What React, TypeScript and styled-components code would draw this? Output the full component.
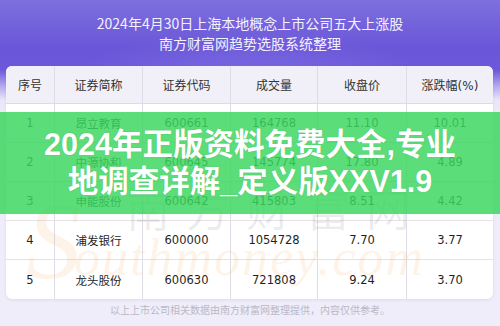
import React from 'react'
import styled, { createGlobalStyle } from 'styled-components'

const GlobalStyle = createGlobalStyle`
  html, body {
    margin: 0;
    padding: 0;
    background: #efedf9;
  }
  * {
    box-sizing: border-box;
  }
`

type Row = {
  no: string
  name: string
  code: string
  volume: string
  close: string
  change: string
}

const headers = ['序号', '证券简称', '证券代码', '成交量', '收盘价', '涨跌幅(%)']

const rows: Row[] = [
  { no: '1', name: '昂立教育', code: '600661', volume: '164768', close: '11.10', change: '10.01' },
  { no: '2', name: '中源协和', code: '600645', volume: '145774', close: '17.80', change: '4.89' },
  { no: '3', name: '申能股份', code: '600642', volume: '415803', close: '8.51', change: '4.42' },
  { no: '4', name: '浦发银行', code: '600000', volume: '1054728', close: '7.70', change: '3.77' },
  { no: '5', name: '龙头股份', code: '600630', volume: '721808', close: '9.24', change: '3.70' },
]

const App = () => {
  return (
    <Page>
      <GlobalStyle />
      <Title>
        <TitleLine>2024年4月30日上海本地概念上市公司五大上涨股</TitleLine>
        <TitleLine>南方财富网趋势选股系统整理</TitleLine>
      </Title>

      <Card>
        <HeadRow>
          {headers.map((h) => (
            <HeadCell key={h}>{h}</HeadCell>
          ))}
        </HeadRow>
        {rows.map((r) => (
          <BodyRow key={r.no}>
            <Cell>{r.no}</Cell>
            <Cell>{r.name}</Cell>
            <Cell>{r.code}</Cell>
            <Cell>{r.volume}</Cell>
            <Cell>{r.close}</Cell>
            <Cell>{r.change}</Cell>
          </BodyRow>
        ))}
      </Card>

      <Footer>以上上市公司相关数据由南方财富网整理提供，内容仅供参考。</Footer>

      {/* faint site watermark over the table */}
      <Watermark>
        <MarkSwoosh>S</MarkSwoosh>
        <MarkCn>南方财富网</MarkCn>
        <MarkEn>outhmoney.com</MarkEn>
      </Watermark>

      <Banner>
        <BannerLine>2024年正版资料免费大全,专业</BannerLine>
        <BannerLine>地调查详解_定义版XXV1.9</BannerLine>
      </Banner>
    </Page>
  )
}

export default App

const Page = styled.div`
  position: relative;
  width: 500px;
  height: 326px;
  overflow: hidden;
  display: flex;
  flex-direction: column;
  font-family: 'DejaVu Sans', 'Noto Sans CJK SC', sans-serif;
  background:
    radial-gradient(ellipse 260px 90px at 250px 92px, rgba(160, 150, 245, 0.35), rgba(160, 150, 245, 0) 70%),
    linear-gradient(180deg, #7d70de 0px, #6a56d8 48px, #6c58da 70px, #b3a9ef 86px, #e9e6f8 100px, #efedf9 120px);
`

const Title = styled.div`
  padding-top: 13px;
  display: flex;
  flex-direction: column;
  align-items: center;
`

const TitleLine = styled.div`
  font-family: 'Noto Sans CJK SC', sans-serif;
  font-size: 14px;
  line-height: 20px;
  color: #f3f1ff;
`

const Card = styled.div`
  margin: 13px 7px 0 6px;
  background: #ffffff;
  border-radius: 6px;
  overflow: hidden;
  box-shadow: 0 1px 3px rgba(90, 80, 160, 0.12);
`

const Grid = styled.div`
  display: grid;
  grid-template-columns: 48px 88px 88px 87px 89px 87px;
`

const HeadRow = styled(Grid)`
  height: 38px;
  background: #f1f0f8;
  border-bottom: 1px solid #dcdbe6;
`

const BodyRow = styled(Grid)`
  height: 39px;
  border-bottom: 1px solid #e2e1ea;

  &:last-child {
    border-bottom: none;
  }
`

const HeadCell = styled.div`
  display: flex;
  align-items: center;
  justify-content: center;
  font-size: 12px;
  color: #333333;
  border-left: 1px solid #dedde7;

  &:first-child {
    border-left: none;
  }
`

const Cell = styled(HeadCell)`
  font-size: 11.5px;
  color: #1f1f1f;
`

const Footer = styled.div`
  height: 22px;
  line-height: 22px;
  text-align: center;
  font-family: 'Noto Sans CJK SC', sans-serif;
  font-size: 10px;
  color: #b9b8c9;
`

const Watermark = styled.div`
  position: absolute;
  inset: 0;
  pointer-events: none;
`

const MarkCn = styled.div`
  position: absolute;
  left: 126px;
  top: 180px;
  font-family: 'Noto Sans CJK SC', sans-serif;
  font-size: 44px;
  line-height: 56px;
  letter-spacing: 16px;
  color: rgba(60, 60, 70, 0.09);
  white-space: nowrap;
`

const MarkEn = styled.div`
  position: absolute;
  left: 74px;
  top: 230px;
  font-family: 'Liberation Serif', serif;
  font-style: italic;
  font-size: 52px;
  line-height: 56px;
  letter-spacing: 2px;
  color: rgba(245, 170, 90, 0.14);
  white-space: nowrap;
`

const MarkSwoosh = styled.div`
  position: absolute;
  left: 26px;
  top: 186px;
  font-family: 'Liberation Serif', serif;
  font-style: italic;
  font-size: 110px;
  line-height: 110px;
  color: rgba(245, 170, 90, 0.14);
`

const Banner = styled.div`
  position: absolute;
  left: 0;
  right: 0;
  top: 112px;
  height: 102px;
  background: rgba(60, 214, 95, 0.84);
  display: flex;
  flex-direction: column;
  align-items: center;
  justify-content: center;
`

const BannerLine = styled.div`
  font-family: 'Liberation Sans', 'Noto Sans CJK SC', sans-serif;
  font-weight: 700;
  font-size: 30.5px;
  line-height: 37px;
  color: #ffffff;
  white-space: nowrap;
  text-shadow: 0 0 1px rgba(0, 60, 20, 0.25);
`
